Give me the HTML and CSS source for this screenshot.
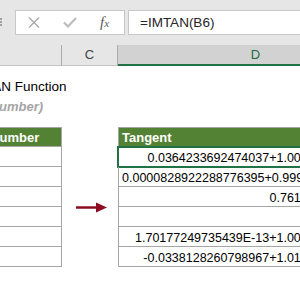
FILE: index.html
```html
<!DOCTYPE html>
<html lang="en">
<head>
  <meta charset="UTF-8" />
  <title>IMTAN Function</title>
  <link rel="stylesheet" href="styles.css">
</head>
<body>
  <div class="toolbar">
    <div class="grip"></div>
    <div class="fx-box">
      <svg class="ico-x" width="12" height="11" viewBox="0 0 12 11">
        <path d="M1 0.5 L11 10.5 M11 0.5 L1 10.5" stroke="#a9a9a9" stroke-width="1.4" fill="none"/>
      </svg>
      <svg class="ico-ok" width="14" height="11" viewBox="0 0 14 11">
        <path d="M1 5.5 L5 9.5 L13 1" stroke="#bdbdbd" stroke-width="2.2" fill="none"/>
      </svg>
      <span class="fx">f<small>x</small></span>
    </div>
    <div class="formula">=IMTAN(B6)</div>
  </div>

  <div class="colheads">
    <div class="ch"></div>
    <div class="ch">C</div>
    <div class="ch sel">D</div>
  </div>

  <div class="sheet">
    <div class="title">IMTAN Function</div>
    <div class="syntax">IMTAN(inumber)</div>

    <div class="grid">
      <div class="b hd">Inumber</div><div class="c"></div><div class="d hd">Tangent</div>
      <div class="b"></div><div class="c"></div><div class="d active">0.0364233692474037+1.00164278225648i</div>
      <div class="b"></div><div class="c"></div><div class="d">0.0000828922288776395+0.999954605143349i</div>
      <div class="b"></div><div class="c"></div><div class="d">0.761594155955765i</div>
      <div class="b"></div><div class="c"></div><div class="d">0</div>
      <div class="b"></div><div class="c"></div><div class="d">1.70177249735439E-13+1.00000000000001i</div>
      <div class="b"></div><div class="c"></div><div class="d">-0.0338128260798967+1.01479361614663i</div>

      <svg class="arrow" width="31" height="11" viewBox="0 0 31 11">
        <path d="M0 5.5 H22" stroke="#8c0d1f" stroke-width="2.5"/>
        <path d="M20 0.5 L31 5.5 L20 10.5 Z" fill="#8c0d1f"/>
      </svg>
    </div>
  </div>
</body>
</html>
```

FILE: styles.css
```css
body {
  margin: 0;
  width: 300px;
  height: 285px;
  overflow: hidden;
  background: #fff;
  font-family: "Liberation Sans", Arial, sans-serif;
}

/* formula bar */
.toolbar {
  display: flex;
  align-items: flex-start;
  height: 45px;
  padding-top: 10px;
  box-sizing: border-box;
  background: #e6e6e6;
}
.grip {
  width: 0;
  height: 8px;
  margin: 8px 13px 0 0;
  border-left: 2px dotted #a0a0a0;
}
.fx-box {
  display: flex;
  align-items: center;
  width: 110px;
  height: 25px;
  box-sizing: border-box;
  padding-left: 12px;
  border: 1px solid #c8c8c8;
  background: #fff;
}
.ico-ok { margin-left: 23px; }
.fx {
  margin-left: 23px;
  font-family: "Liberation Serif", "Times New Roman", serif;
  font-style: italic;
  font-size: 15px;
  color: #5a5a5a;
}
.fx small { font-size: 11px; }
.formula {
  flex: 1;
  height: 25px;
  margin-left: 3px;
  box-sizing: border-box;
  padding-left: 11px;
  border: 1px solid #c8c8c8;
  border-right: none;
  background: #fff;
  font-size: 13.5px;
  line-height: 23px;
  color: #262626;
}

/* column headers */
.colheads {
  display: grid;
  grid-template-columns: 82px 56px 276px;
  margin-left: -20px;
  height: 21px;
}
.ch {
  box-sizing: border-box;
  background: #e6e6e6;
  border-right: 1px solid #ababab;
  border-bottom: 1px solid #c4c4c4;
  text-align: center;
  font-size: 13px;
  line-height: 20px;
  color: #444;
}
.ch.sel {
  background: #d2d2d2;
  color: #1e6b41;
  border-bottom: 2px solid #217346;
  line-height: 19px;
}

/* sheet */
.sheet {
  margin-left: -20px;
  padding-top: 11px;
}
.title {
  margin-left: -10px;
  font-size: 13.5px;
  line-height: 20px;
  color: #000;
  white-space: nowrap;
}
.syntax {
  margin-left: -37px;
  font-size: 13px;
  line-height: 20px;
  font-weight: bold;
  font-style: italic;
  color: #a5a5a5;
  white-space: nowrap;
}
.grid {
  position: relative;
  display: grid;
  grid-template-columns: 82px 56px 276px;
  grid-auto-rows: 20px;
  margin-top: 10px;
}
.b, .d {
  box-sizing: border-box;
  border-bottom: 1px solid #a6a6a6;
  white-space: nowrap;
  overflow: hidden;
}
.b { border-right: 1px solid #a6a6a6; }
.d {
  border-left: 1px solid #a6a6a6;
  padding: 3px 7px 0 3px;
  text-align: right;
  font-size: 12.5px;
  line-height: 17px;
  color: #000;
}
.hd {
  border-top: 1px solid #a6a6a6;
  background: #548235;
  color: #fff;
  font-weight: bold;
  font-size: 13px;
  line-height: 16px;
  padding-top: 2px;
  text-align: left;
}
.b.hd { padding-left: 8px; }
.d.hd { padding-left: 3px; }
.active {
  outline: 2px solid #217346;
  outline-offset: -1px;
}
.arrow {
  position: absolute;
  left: 96px;
  top: 75px;
}
```
